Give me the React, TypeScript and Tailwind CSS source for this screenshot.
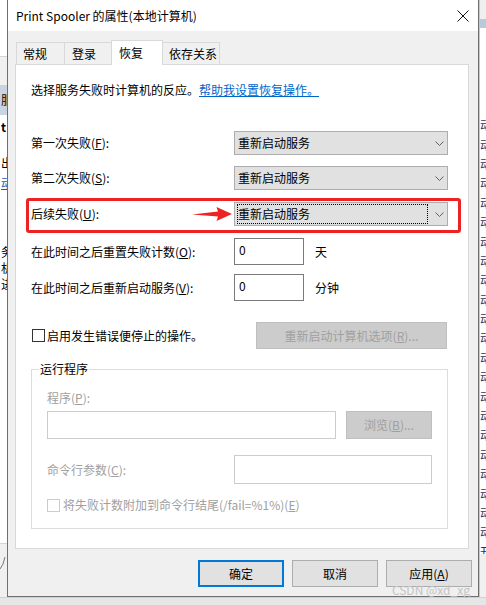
import type { ReactNode } from "react"

function Chevron() {
  return (
    <svg width="9" height="5" viewBox="0 0 9 5" className="shrink-0">
      <path d="M0.5 0.5L4.5 4.5L8.5 0.5" fill="none" stroke="#606060" strokeWidth="1" />
    </svg>
  )
}

function Select({ focused = false }: { focused?: boolean }) {
  return (
    <div className="flex h-[24px] w-[214px] items-center border border-[#adadad] bg-[#e1e1e1] pl-[2px]">
      <div
        className={`flex h-[20px] w-[191px] items-center ${
          focused ? "border border-dotted border-black" : "border border-transparent"
        }`}
      >
        重新启动服务
      </div>
      <div className="flex flex-1 justify-center pl-[3px]">
        <Chevron />
      </div>
    </div>
  )
}

function Row({ label, children }: { label: ReactNode; children: ReactNode }) {
  return (
    <div className="flex items-center">
      <div className="w-[203px] shrink-0">{label}</div>
      {children}
    </div>
  )
}

function NumberBox() {
  return <div className="h-[27px] w-[70px] border border-[#7a7a7a] bg-white pl-[4px] pt-[3px]">0</div>
}

function Btn({ children, primary = false }: { children: ReactNode; primary?: boolean }) {
  return (
    <div
      className={`flex h-[27px] w-[86px] items-center justify-center bg-[#e1e1e1] ${
        primary ? "border-2 border-[#0078d7]" : "border border-[#adadad]"
      }`}
    >
      {children}
    </div>
  )
}

function RedArrow() {
  return (
    <svg width="40" height="16" viewBox="0 0 40 16" className="mr-[2px] shrink-0">
      <path d="M0 8.5L26 5.5L24.5 1L40 8L24.5 15L26 10.5Z" fill="#ee2222" />
    </svg>
  )
}

function LeftStrip() {
  return (
    <div className="flex h-[597px] w-[7px] shrink-0 flex-col overflow-hidden whitespace-nowrap bg-white">
      <div className="h-[57px] border-b border-[#d4d4d4] bg-white" />
      <div className="h-[28px] bg-[#f0f0f0]" />
      <div className="h-[30px] bg-[#c9d4e2] pl-[1px] pt-[7px]">服务</div>
      <div className="flex flex-1 flex-col pl-[1px]">
        <div className="mt-[4px] font-bold">t</div>
        <div className="mt-[20px]">出错</div>
        <div className="mt-[4px] text-[#1a56b0] underline">动</div>
        <div className="mt-[53px]">务</div>
        <div>机</div>
        <div>进</div>
      </div>
      <div className="h-[54px] border-t border-[#d4d4d4] bg-[#f0f0f0] pt-[12px]">
        <svg width="7" height="14" viewBox="0 0 7 14">
          <path d="M0 13L3 8L5 1" fill="none" stroke="#777" strokeWidth="1" />
        </svg>
      </div>
    </div>
  )
}

function RightStrip() {
  return (
    <div className="flex h-[597px] w-[7px] shrink-0 flex-col overflow-hidden whitespace-nowrap border-l border-[#c8c8c8] bg-white">
      <div className="h-[20px] bg-[#efefef]" />
      <div className="h-[10px] bg-[#b9c9dc]" />
      <div className="flex flex-1 flex-col pt-[89px] text-[#2e2e58]">
        {Array.from({ length: 22 }).map((_, i) => (
          <div key={i} className="h-[19.4px]">
            动_
          </div>
        ))}
        <div className="h-[10px] overflow-hidden">开始</div>
      </div>
      <div className="h-[46px] bg-[#f0f0f0]" />
    </div>
  )
}

export default function App() {
  return (
    <div className="relative flex h-[605px] w-[486px] flex-col overflow-hidden bg-[#e4e4e4] font-['Noto_Sans_CJK_SC','Noto_Sans',sans-serif] text-[12px] leading-[16px] text-black">
      <div className="flex">
        <LeftStrip />

        {/* dialog */}
        <div className="flex h-[597px] w-[472px] shrink-0 flex-col border-x border-b border-[#6f6f6f] bg-[#f0f0f0]">
          <div className="flex h-[31px] items-center justify-between bg-white pl-[8px] pr-[9px]">
            <span>Print Spooler 的属性(本地计算机)</span>
            <svg width="12" height="12" viewBox="0 0 12 12">
              <path d="M0.5 0.5L11.5 11.5M11.5 0.5L0.5 11.5" stroke="#111" strokeWidth="1" />
            </svg>
          </div>

          <div className="flex flex-col pl-[7px] pr-[9px] pt-[9px]">
            {/* tabs */}
            <div className="flex h-[24px] items-start pl-[1px]">
              <div className="mt-[2px] flex h-[22px] w-[49px] items-center border-x border-t border-[#d9d9d9] pl-[6px]">
                常规
              </div>
              <div className="-ml-px mt-[2px] flex h-[22px] w-[48px] items-center border-x border-t border-[#d9d9d9] pl-[7px]">
                登录
              </div>
              <div className="relative z-10 -ml-px flex h-[25px] w-[52px] items-center border-x border-t border-[#d9d9d9] bg-white pl-[7px]">
                恢复
              </div>
              <div className="-ml-px mt-[2px] flex h-[22px] w-[58px] items-center border-x border-t border-[#d9d9d9] pl-[6px]">
                依存关系
              </div>
            </div>

            {/* panel */}
            <div className="flex h-[485px] w-[454px] flex-col border border-[#d9d9d9] bg-white pl-[15px] pt-[17px]">
              <div>
                选择服务失败时计算机的反应。
                <span className="text-[#0066cc] underline">帮助我设置恢复操作。</span>
              </div>

              <div className="mt-[33px]">
                <Row label={<>第一次失败(<u>F</u>):</>}>
                  <Select />
                </Row>
              </div>
              <div className="mt-[11px]">
                <Row label={<>第二次失败(<u>S</u>):</>}>
                  <Select />
                </Row>
              </div>

              <div className="-ml-[5px] mt-[8px] w-[435px] rounded-[3px] border-[3px] border-[#ee2222] pb-[4px] pl-[2px] pt-[1px]">
                <Row
                  label={
                    <div className="flex items-center justify-between">
                      <span>
                        后续失败(<u>U</u>):
                      </span>
                      <RedArrow />
                    </div>
                  }
                >
                  <Select focused />
                </Row>
              </div>

              <div className="mt-[5px]">
                <Row label={<>在此时间之后重置失败计数(<u>O</u>):</>}>
                  <NumberBox />
                  <span className="ml-[11px]">天</span>
                </Row>
              </div>
              <div className="mt-[9px]">
                <Row label={<>在此时间之后重新启动服务(<u>V</u>):</>}>
                  <NumberBox />
                  <span className="ml-[11px]">分钟</span>
                </Row>
              </div>

              <div className="mt-[21px] flex w-[416px] items-center justify-between pl-[1px]">
                <div className="flex items-center gap-[2px]">
                  <div className="h-[13px] w-[13px] border border-[#333333] bg-white" />
                  <span>启用发生错误便停止的操作。</span>
                </div>
                <div className="flex h-[27px] w-[191px] items-center justify-center border border-[#bfbfbf] bg-[#cccccc] text-[#a0a0a0]">
                  重新启动计算机选项(<u>R</u>)...
                </div>
              </div>

              <fieldset className="mt-[12px] w-[417px] border border-[#dcdcdc] px-[15px] pb-[15px]">
                <legend className="-ml-[8px] px-[1px]">运行程序</legend>
                <div className="mt-[13px] text-[#a0a0a0]">
                  程序(<u>P</u>):
                </div>
                <div className="mt-[5px] flex gap-[10px]">
                  <div className="h-[28px] w-[289px] border border-[#cccccc] bg-white" />
                  <div className="flex h-[28px] w-[86px] items-center justify-center border border-[#bfbfbf] bg-[#cccccc] text-[#a0a0a0]">
                    浏览(<u>B</u>)...
                  </div>
                </div>
                <div className="mt-[16px] flex items-center">
                  <div className="w-[187px] text-[#a0a0a0]">
                    命令行参数(<u>C</u>):
                  </div>
                  <div className="h-[29px] w-[198px] border border-[#cccccc] bg-white" />
                </div>
                <div className="mt-[13px] flex items-center gap-[3px] text-[#a0a0a0]">
                  <div className="h-[13px] w-[13px] border border-[#cccccc] bg-white" />
                  <span>
                    将失败计数附加到命令行结尾(/fail=%1%)(<u>E</u>)
                  </span>
                </div>
              </fieldset>
            </div>
          </div>

          {/* buttons */}
          <div className="mt-[11px] flex justify-end gap-[8px] pr-[6px]">
            <Btn primary>确定</Btn>
            <Btn>取消</Btn>
            <Btn>应用(<u>A</u>)</Btn>
          </div>
        </div>

        <RightStrip />
      </div>
      <div className="h-[8px] border-t border-[#d0d0d0] bg-[#e6e6e6]" />

      <div className="absolute right-[16px] top-[582px] text-[12px] text-[#c4c4c4]">CSDN @xd_xg</div>
    </div>
  )
}
